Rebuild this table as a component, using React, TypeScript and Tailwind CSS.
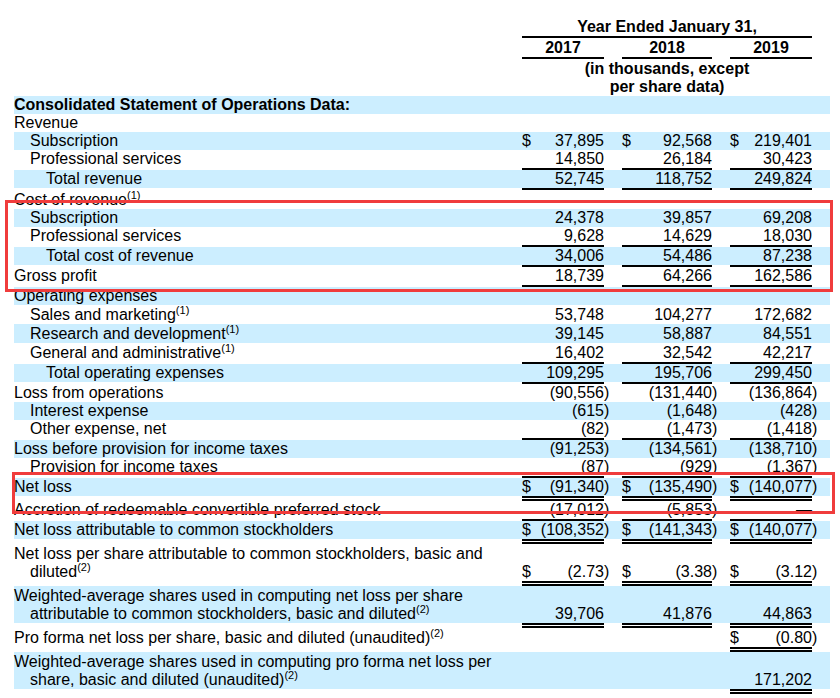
import type { ReactNode } from 'react'

type Rule = 's' | 'd' | null

type Row = {
  label: ReactNode
  indent?: 0 | 1 | 2
  blue?: boolean
  bold?: boolean
  sup?: boolean
  cells?: [string, string, string]
  dollar?: [boolean, boolean, boolean]
  rule?: [Rule, Rule, Rule]
}

const grid = 'grid grid-cols-[508px_82px_18px_90px_18px_82px_18px]'

function Sup({ n }: { n: number }) {
  return <span className="relative -top-[6px] text-[11px] leading-none">({n})</span>
}

const S: [Rule, Rule, Rule] = ['s', 's', 's']
const D: [Rule, Rule, Rule] = ['d', 'd', 'd']
const $$: [boolean, boolean, boolean] = [true, true, true]

const rows: Row[] = [
  { label: 'Consolidated Statement of Operations Data:', blue: true, bold: true },
  { label: 'Revenue' },
  { label: 'Subscription', indent: 1, blue: true, cells: ['37,895', '92,568', '219,401'], dollar: $$ },
  { label: 'Professional services', indent: 1, cells: ['14,850', '26,184', '30,423'], rule: S },
  { label: 'Total revenue', indent: 2, blue: true, cells: ['52,745', '118,752', '249,824'], rule: S },
  { label: <>Cost of revenue<Sup n={1} /></>, sup: true },
  { label: 'Subscription', indent: 1, blue: true, cells: ['24,378', '39,857', '69,208'] },
  { label: 'Professional services', indent: 1, cells: ['9,628', '14,629', '18,030'], rule: S },
  { label: 'Total cost of revenue', indent: 2, blue: true, cells: ['34,006', '54,486', '87,238'], rule: S },
  { label: 'Gross profit', cells: ['18,739', '64,266', '162,586'], rule: S },
  { label: 'Operating expenses', blue: true },
  { label: <>Sales and marketing<Sup n={1} /></>, sup: true, indent: 1, cells: ['53,748', '104,277', '172,682'] },
  { label: <>Research and development<Sup n={1} /></>, sup: true, indent: 1, blue: true, cells: ['39,145', '58,887', '84,551'] },
  { label: <>General and administrative<Sup n={1} /></>, sup: true, indent: 1, cells: ['16,402', '32,542', '42,217'], rule: S },
  { label: 'Total operating expenses', indent: 2, blue: true, cells: ['109,295', '195,706', '299,450'], rule: S },
  { label: 'Loss from operations', cells: ['(90,556)', '(131,440)', '(136,864)'] },
  { label: 'Interest expense', indent: 1, blue: true, cells: ['(615)', '(1,648)', '(428)'] },
  { label: 'Other expense, net', indent: 1, cells: ['(82)', '(1,473)', '(1,418)'], rule: S },
  { label: 'Loss before provision for income taxes', blue: true, cells: ['(91,253)', '(134,561)', '(138,710)'] },
  { label: 'Provision for income taxes', indent: 1, cells: ['(87)', '(929)', '(1,367)'], rule: S },
  { label: 'Net loss', blue: true, cells: ['(91,340)', '(135,490)', '(140,077)'], dollar: $$, rule: D },
  { label: 'Accretion of redeemable convertible preferred stock', cells: ['(17,012)', '(5,853)', '—'], rule: S },
  { label: 'Net loss attributable to common stockholders', blue: true, cells: ['(108,352)', '(141,343)', '(140,077)'], dollar: $$, rule: D },
  {
    label: (
      <>
        <span className="block">Net loss per share attributable to common stockholders, basic and</span>
        <span className="block pl-4">diluted<Sup n={2} /></span>
      </>
    ),
    sup: true,
    cells: ['(2.73)', '(3.38)', '(3.12)'],
    dollar: $$,
    rule: D,
  },
  {
    label: (
      <>
        <span className="block">Weighted-average shares used in computing net loss per share</span>
        <span className="block pl-4">attributable to common stockholders, basic and diluted<Sup n={2} /></span>
      </>
    ),
    sup: true,
    blue: true,
    cells: ['39,706', '41,876', '44,863'],
    rule: D,
  },
  {
    label: <>Pro forma net loss per share, basic and diluted (unaudited)<Sup n={2} /></>,
    sup: true,
    cells: ['', '', '(0.80)'],
    dollar: [false, false, true],
    rule: [null, null, 'd'],
  },
  {
    label: (
      <>
        <span className="block">Weighted-average shares used in computing pro forma net loss per</span>
        <span className="block pl-4">share, basic and diluted (unaudited)<Sup n={2} /></span>
      </>
    ),
    sup: true,
    blue: true,
    cells: ['', '', '171,202'],
    rule: [null, null, 'd'],
  },
]

function RuleRow({ rule }: { rule: [Rule, Rule, Rule] }) {
  const double = rule.some((r) => r === 'd')
  return (
    <div className={`${grid} ${double ? 'h-[5px]' : 'h-[2px]'}`}>
      <div />
      {rule.map((r, i) => (
        <>
          <div
            key={`r${i}`}
            className={r === 'd' ? 'h-[5px] border-y-2 border-black' : r === 's' ? 'h-[2px] bg-black' : ''}
          />
          <div key={`g${i}`} />
        </>
      ))}
    </div>
  )
}

function DataRow({ row }: { row: Row }) {
  const pad = row.indent === 2 ? 'pl-8' : row.indent === 1 ? 'pl-4' : ''
  return (
    <>
      <div className={`${grid} items-end ${row.sup ? 'pt-[1px]' : ''} ${row.blue ? 'bg-[#cceeff]' : 'bg-white'}`}>
        <div className={`${pad} ${row.bold ? 'font-bold' : ''} whitespace-nowrap`}>{row.label}</div>
        {[0, 1, 2].map((i) => {
          const raw = row.cells ? row.cells[i] : ''
          const paren = raw.endsWith(')')
          const num = paren ? raw.slice(0, -1) : raw
          return (
            <>
              <div key={`c${i}`} className="flex justify-between whitespace-nowrap">
                <span>{row.dollar && row.dollar[i] ? '$' : ''}</span>
                <span>{num}</span>
              </div>
              <div key={`p${i}`}>{paren ? ')' : ''}</div>
            </>
          )
        })}
      </div>
      {row.rule && <RuleRow rule={row.rule} />}
    </>
  )
}

export default function App() {
  return (
    <div className="relative w-[840px] h-[698px] overflow-hidden bg-white pt-[18px] pl-[14px] text-[16px] leading-[18px] text-black font-['Liberation_Sans',Arial,sans-serif]">
      <div className="w-[816px]">
        <div className={grid}>
          <div className="col-start-2 col-span-5 border-b-2 border-black text-center font-bold">
            Year Ended January 31,
          </div>
        </div>
        <div className={`${grid} font-bold`}>
          <div />
          <div className="h-[21px] pt-[1px] border-b-2 border-black text-center">2017</div>
          <div />
          <div className="h-[21px] pt-[1px] border-b-2 border-black text-center">2018</div>
          <div />
          <div className="h-[21px] pt-[1px] border-b-2 border-black text-center">2019</div>
          <div />
        </div>
        <div className={grid}>
          <div className="col-start-2 col-span-5 h-[37px] pt-[1px] text-center font-bold">
            (in thousands, except
            <br />
            per share data)
          </div>
        </div>
        {rows.map((r, i) => (
          <DataRow key={i} row={r} />
        ))}
      </div>

      <div className="absolute left-[5px] top-[200px] w-[828px] h-[92px] border-[3px] border-[#f03c3c]" />
      <div className="absolute left-[12px] top-[472px] w-[823px] h-[42px] border-[3px] border-[#f03c3c]" />
    </div>
  )
}
